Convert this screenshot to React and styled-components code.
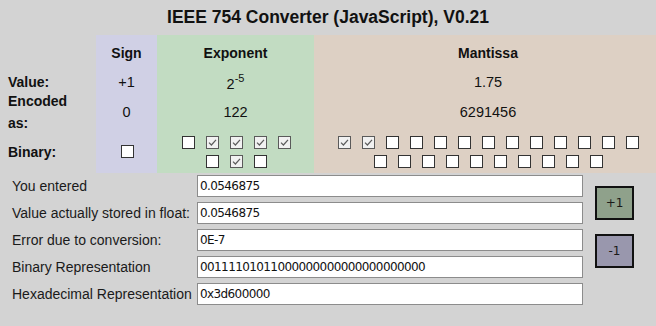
import React from 'react';
import styled, {createGlobalStyle} from "styled-components";

const tones = {
  none: 'transparent',
  sign: '#d0d0e5',
  exponent: '#c2dcc2',
  mantissa: '#ddd0c4',
};

const GlobalStyle = createGlobalStyle`
  html, body {
    margin: 0;
    padding: 0;
    background: #d3d3d3;
  }
  body {
    font-family: "Liberation Sans", Arial, sans-serif;
    color: #111;
  }
`

const Page = styled.div`
  width: 100%;
`

const Title = styled.h1`
  margin: 0;
  height: 35px;
  display: flex;
  align-items: center;
  justify-content: center;
  font-size: 17.5px;
  font-weight: 700;
`

const BitTable = styled.div`
  display: grid;
  grid-template-columns: 96px 61px 157px 1fr;
  grid-template-rows: 35px 24px 36px 43px;
`

const Cell = styled.div`
  background: ${p => tones[p.$tone]};
  display: flex;
  align-items: center;
  justify-content: center;
  text-align: center;
  padding: ${p => p.$tone === 'mantissa' ? '0 8px 0 14px' : '0 10px'};
  font-size: ${p => p.$bold ? '14px' : '14.5px'};
  font-weight: ${p => p.$bold ? 700 : 400};
  min-width: 0;

  sup {
    font-size: 11px;
    position: relative;
    top: -1px;
  }
`

const RowLabel = styled.div`
  display: flex;
  align-items: center;
  padding: 0 14px 0 8px;
  font-size: 14px;
  font-weight: 700;
  line-height: 22px;
`

const Bits = styled.div`
  display: flex;
  flex-wrap: wrap;
  justify-content: center;
`

const Box = styled.span`
  box-sizing: border-box;
  width: 13px;
  height: 13px;
  margin: 3px 5px 3px 6px;
  border: 1px solid ${p => p.$on ? '#5a5a5a' : '#333'};
  background: ${p => p.$on ? '#f1f1f1' : '#fff'};
  display: flex;
  align-items: center;
  justify-content: center;
`

const Form = styled.div`
  display: flex;
  padding-top: 2px;
`

const Fields = styled.div`
  display: grid;
  grid-template-columns: 185px 386px;
  row-gap: 5px;
  padding-left: 12px;
`

const FieldLabel = styled.label`
  display: flex;
  align-items: center;
  font-size: 14px;
  white-space: nowrap;
  color: #1a1a1a;
`

const Field = styled.input`
  box-sizing: border-box;
  height: 22px;
  width: 100%;
  margin: 0;
  padding: 0 2px;
  border: 1px solid #8c8c8c;
  background: #fff;
  color: #111;
  font-family: "DejaVu Sans", Tahoma, sans-serif;
  font-size: 12px;
  letter-spacing: -0.6px;
  outline: none;
`

const Buttons = styled.div`
  display: flex;
  flex-direction: column;
  gap: 14px;
  margin-left: 12px;
  padding-top: 11px;
`

const StepButton = styled.button`
  box-sizing: border-box;
  width: 39px;
  height: 34px;
  margin: 0;
  padding: 0;
  border: 2px solid #111;
  background: ${p => p.$up ? '#8fa18b' : '#9997ad'};
  color: #1a1a1a;
  font-family: "DejaVu Sans", Tahoma, sans-serif;
  font-size: 12px;
`

function Bit({on}) {
  return (
    <Box $on={on}>
      {on && (
        <svg width="9" height="9" viewBox="0 0 9 9">
          <path d="M1 4.6 L3.4 7 L8 1.8" fill="none" stroke="#5c5c5c" strokeWidth="1.2" />
        </svg>
      )}
    </Box>
  );
}

const bits = '00111101011000000000000000000000';
const expBits = bits.slice(1, 9).split('');
const manBits = bits.slice(9).split('');

const fields = [
  ['You entered', '0.0546875'],
  ['Value actually stored in float:', '0.0546875'],
  ['Error due to conversion:', '0E-7'],
  ['Binary Representation', bits],
  ['Hexadecimal Representation', '0x3d600000'],
];

function App() {
  return (
    <Page>
      <GlobalStyle/>
      <Title>IEEE 754 Converter (JavaScript), V0.21</Title>
      <BitTable>
        <RowLabel/>
        <Cell $tone="sign" $bold>Sign</Cell>
        <Cell $tone="exponent" $bold>Exponent</Cell>
        <Cell $tone="mantissa" $bold>Mantissa</Cell>

        <RowLabel>Value:</RowLabel>
        <Cell $tone="sign">+1</Cell>
        <Cell $tone="exponent"><span>2<sup>-5</sup></span></Cell>
        <Cell $tone="mantissa">1.75</Cell>

        <RowLabel>Encoded as:</RowLabel>
        <Cell $tone="sign">0</Cell>
        <Cell $tone="exponent">122</Cell>
        <Cell $tone="mantissa">6291456</Cell>

        <RowLabel>Binary:</RowLabel>
        <Cell $tone="sign"><Bit on={bits[0] === '1'}/></Cell>
        <Cell $tone="exponent">
          <Bits>{expBits.map((b, i) => <Bit key={i} on={b === '1'}/>)}</Bits>
        </Cell>
        <Cell $tone="mantissa">
          <Bits>{manBits.map((b, i) => <Bit key={i} on={b === '1'}/>)}</Bits>
        </Cell>
      </BitTable>
      <Form>
        <Fields>
          {fields.map(([label, value]) => (
            <React.Fragment key={label}>
              <FieldLabel>{label}</FieldLabel>
              <Field readOnly value={value}/>
            </React.Fragment>
          ))}
        </Fields>
        <Buttons>
          <StepButton $up>+1</StepButton>
          <StepButton>-1</StepButton>
        </Buttons>
      </Form>
    </Page>
  );
}

export default App;
